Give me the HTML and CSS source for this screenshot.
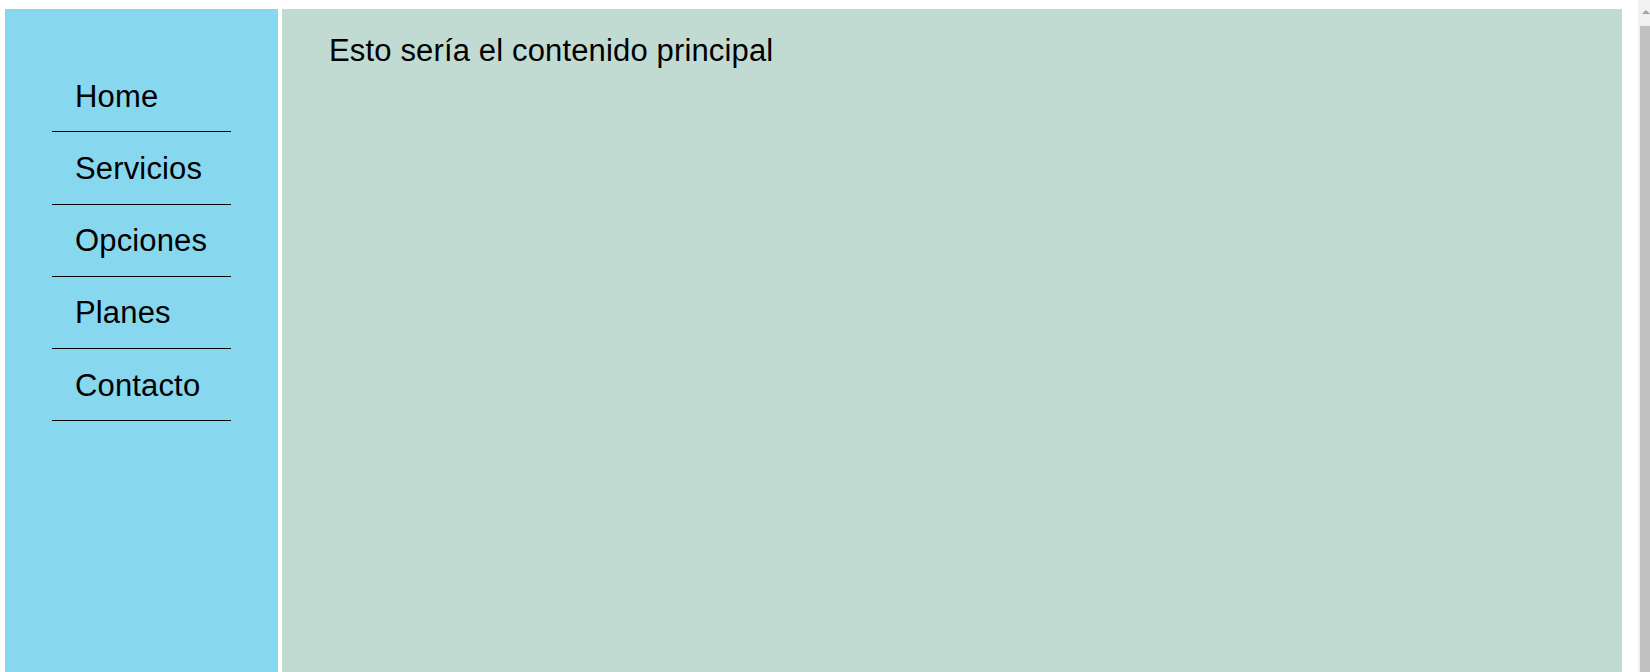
FILE: index.html
```html
<!DOCTYPE html>
<html lang="es">
<head>
<meta charset="utf-8">
<title>Layout</title>
<link rel="stylesheet" href="styles.css">
</head>
<body>
<div class="layout">
  <nav class="sidebar">
    <ul class="menu">
      <li class="menu-item">Home</li>
      <li class="menu-item">Servicios</li>
      <li class="menu-item">Opciones</li>
      <li class="menu-item">Planes</li>
      <li class="menu-item">Contacto</li>
    </ul>
  </nav>
  <main class="content">
    <p class="content-text">Esto sería el contenido principal</p>
  </main>
</div>
<div class="scrollbar" aria-hidden="true">
  <span class="scroll-arrow"></span>
  <span class="scroll-thumb"></span>
</div>
</body>
</html>
```
FILE: styles.css
```css
html, body {
  margin: 0;
  padding: 0;
  background: #ffffff;
  overflow: hidden;
}
body {
  font-family: "Liberation Sans", Arial, sans-serif;
  color: #000000;
}
.layout {
  display: flex;
  gap: 4px;
  padding: 9px 0 0 5px;
  height: 672px;
  box-sizing: border-box;
}
.sidebar {
  flex: 0 0 273px;
  background: #87d7ef;
  padding-top: 51px;
  box-sizing: border-box;
}
.menu {
  list-style: none;
  margin: 0 0 0 47px;
  padding: 0;
  width: 179px;
}
.menu-item {
  font-size: 31px;
  letter-spacing: 0.15px;
  line-height: 34.25px;
  padding: 19.5px 0 17.5px 23px;
  border-bottom: 1px solid #000000;
}
.content {
  flex: 0 0 1340px;
  background: #c1dbd3;
  padding: 24px 0 0 47px;
  box-sizing: border-box;
}
.content-text {
  margin: 0;
  font-size: 31px;
  letter-spacing: 0.15px;
  line-height: 35px;
}
.scrollbar {
  position: fixed;
  top: 0;
  left: 1638px;
  width: 12px;
  height: 100%;
  background: #f1f1f1;
}
.scroll-arrow {
  position: absolute;
  left: 4px;
  top: 10px;
  width: 0;
  height: 0;
  border-left: 4px solid transparent;
  border-right: 4px solid transparent;
  border-bottom: 4px solid #a3a3a3;
}
.scroll-thumb {
  position: absolute;
  left: 2px;
  right: 0;
  top: 26px;
  bottom: 0;
  background: #c1c1c1;
}
```
